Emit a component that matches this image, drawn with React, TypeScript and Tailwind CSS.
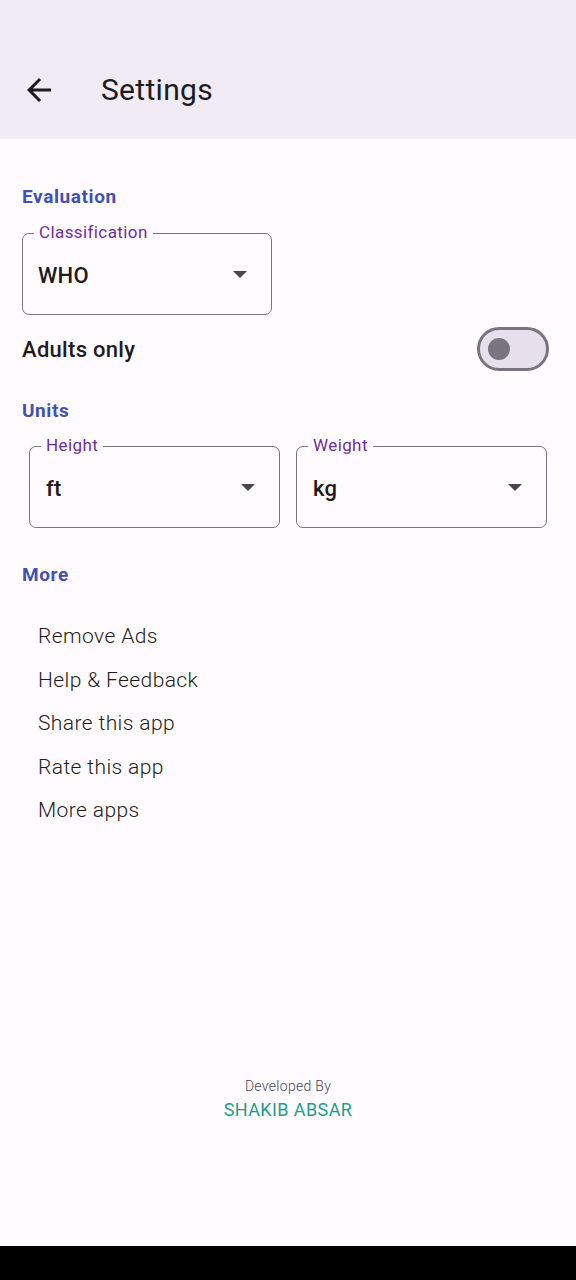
import React from 'react';

const Caret: React.FC = () => (
  <svg width="14" height="7" viewBox="0 0 14 7" className="shrink-0">
    <path d="M0 0h14L7 7z" fill="#49454f" />
  </svg>
);

const SelectField: React.FC<{ label: string; value: string; className?: string; pl: string }> = ({ label, value, className, pl }) => (
  <div className={`relative h-[82px] rounded-[7px] border-[1.5px] border-[#79747e] flex items-center justify-between pr-[24px] ${pl} ${className ?? ''}`}>
    <span className="absolute left-[11px] top-[-12px] bg-[#fffbfe] px-[5px] text-[17px] leading-[20px] tracking-[0.4px] text-[#6f2f9a]">
      {label}
    </span>
    <span className="pt-[2px] text-[22px] font-medium tracking-[0.2px] text-[#1d1b20]">{value}</span>
    <Caret />
  </div>
);

const moreItems = ['Remove Ads', 'Help & Feedback', 'Share this app', 'Rate this app', 'More apps'];

export default function App() {
  return (
    <div className="w-[576px] h-[1280px] bg-black flex flex-col" style={{ fontFamily: 'Roboto, "Noto Sans", sans-serif' }}>
      <div className="h-[1246px] bg-[#fffbfe] flex flex-col">
        {/* Top app bar */}
        <header className="h-[139px] bg-[#f0ebf4] flex items-center pt-[41px] pl-[21px]">
          <svg width="36" height="36" viewBox="0 0 24 24">
            <path d="M20 11H7.83l5.59-5.59L12 4l-8 8 8 8 1.41-1.41L7.83 13H20v-2z" fill="#1d1b20" />
          </svg>
          <h1 className="ml-[44px] text-[30px] leading-[36px] tracking-[0.3px] text-[#1d1b20]">Settings</h1>
        </header>

        {/* Evaluation */}
        <section className="px-[22px] pt-[46px]">
          <h2 className="text-[19px] leading-[24px] font-bold tracking-[0.6px] text-[#3f51b5]">Evaluation</h2>
          <SelectField label="Classification" value="WHO" className="mt-[24px] w-[250px] h-[80px]" pl="pl-[15px]" />
          <div className="mt-[12px] flex items-center justify-between pr-[5px]">
            <span className="text-[22px] font-medium tracking-[0.3px] text-[#1d1b20]">Adults only</span>
            <div className="w-[72px] h-[44px] rounded-full border-[3px] border-[#79747e] bg-[#e7e0ec] flex items-center pl-[8px]">
              <div className="w-[22px] h-[22px] rounded-full bg-[#79747e]" />
            </div>
          </div>
          <h2 className="mt-[28px] text-[19px] leading-[24px] font-bold tracking-[0.6px] text-[#3f51b5]">Units</h2>
        </section>

        <div className="mt-[23px] px-[29px] grid grid-cols-2 gap-[16px]">
          <SelectField label="Height" value="ft" pl="pl-[16px]" />
          <SelectField label="Weight" value="kg" pl="pl-[16px]" />
        </div>

        {/* More */}
        <section className="px-[22px] pt-[35px]">
          <h2 className="text-[19px] leading-[24px] font-bold tracking-[0.6px] text-[#3f51b5]">More</h2>
          <ul className="mt-[28px] pl-[16px]">
            {moreItems.map((item) => (
              <li key={item} className="h-[43.5px] flex items-center text-[21px] font-light tracking-[0.4px] text-[#1d1b20]">
                {item}
              </li>
            ))}
          </ul>
        </section>

        <footer className="mt-auto pb-[125px] flex flex-col items-center">
          <span className="text-[14px] leading-[18px] font-light tracking-[0.3px] text-[#49454f]">Developed By</span>
          <span className="mt-[4px] text-[18px] leading-[22px] tracking-[0.4px] text-[#1f9e8b]">SHAKIB ABSAR</span>
        </footer>
      </div>
    </div>
  );
}
